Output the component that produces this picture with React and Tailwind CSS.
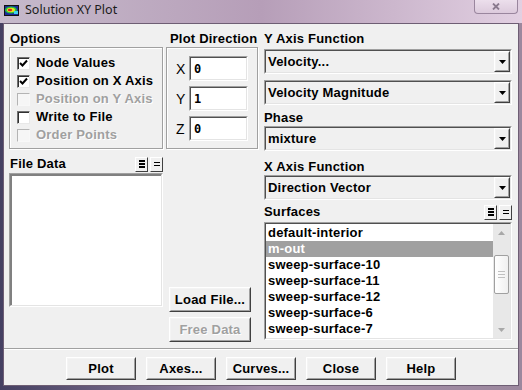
import React from 'react';

// win-classic bevels
const raised = 'border border-t-white border-l-white border-b-[#404040] border-r-[#404040]';
const raisedInner = 'border border-t-[#f4f4f4] border-l-[#f4f4f4] border-b-[#a0a0a0] border-r-[#a0a0a0]';
const sunken = 'border border-t-[#a0a0a0] border-l-[#a0a0a0] border-b-white border-r-white';
const sunkenInner = 'border border-t-[#505050] border-l-[#505050] border-b-[#e4e4e4] border-r-[#e4e4e4]';
const etched = 'border border-[#a0a0a0] shadow-[inset_1px_1px_0_#fff,1px_1px_0_#fff]';
const dim = 'text-[#a0a0a0] [text-shadow:1px_1px_0_#fff]';

function Btn({ children, disabled, className = '' }) {
  return (
    <div className={`${raised} bg-[#f0f0f0] ${className}`}>
      <div className={`${raisedInner} flex h-full w-full items-center justify-center text-[13px] font-bold tracking-[0.2px] ${disabled ? dim : 'text-black'}`}>
        {children}
      </div>
    </div>
  );
}

function Check({ label, checked, disabled }) {
  return (
    <div className="flex h-[18px] items-center gap-[6px]">
      <span
        className={`flex h-[13px] w-[13px] items-center justify-center border ${
          disabled
            ? 'border-t-[#b4b4b4] border-l-[#b4b4b4] border-b-[#f8f8f8] border-r-[#f8f8f8] bg-[#f6f6f6]'
            : 'border-t-[#707070] border-l-[#707070] border-b-[#e8e8e8] border-r-[#e8e8e8] bg-white shadow-[inset_1px_1px_0_#303030]'
        }`}
      >
        {checked && (
          <svg width="9" height="9" viewBox="0 0 9 9">
            <path d="M1 4 L3.5 6.5 L8 1.5" stroke="#000" strokeWidth="2" fill="none" />
          </svg>
        )}
      </span>
      <span className={`text-[13px] font-bold tracking-[0.2px] ${disabled ? dim : 'text-black'}`}>{label}</span>
    </div>
  );
}

function Combo({ value }) {
  return (
    <div className={`${sunken} h-[25px] bg-[#f0f0f0]`}>
      <div className={`${sunkenInner} flex h-full items-center bg-[#f0f0f0]`}>
        <span className="flex-1 pl-[2px] text-[13px] font-bold tracking-[0.2px]">{value}</span>
        <div className={`${raised} h-[21px] w-[16px]`}>
          <div className={`${raisedInner} flex h-full items-center justify-center`}>
            <svg width="7" height="4" viewBox="0 0 7 4">
              <path d="M0 0 H7 L3.5 4 Z" fill="#000" />
            </svg>
          </div>
        </div>
      </div>
    </div>
  );
}

function AxisInput({ axis, value }) {
  return (
    <div className="flex h-[25px] items-center">
      <span className="w-[13px] text-[14px] leading-none text-black">{axis}</span>
      <div className={`${sunken} h-[25px] w-[59px] bg-white`}>
        <div className={`${sunkenInner} flex h-full items-center bg-white pl-[3px] font-['DejaVu_Sans_Mono',monospace] text-[12px] font-bold`}>
          {value}
        </div>
      </div>
    </div>
  );
}

function MiniBtns() {
  return (
    <div className="flex gap-[2px]">
      <div className={`${raised} h-[15px] w-[13px] bg-[#f0f0f0]`}>
        <div className="flex h-full flex-col items-center justify-center gap-[1px]">
          <span className="h-[2px] w-[6px] bg-black" />
          <span className="h-[2px] w-[6px] bg-black" />
          <span className="h-[2px] w-[6px] bg-black" />
        </div>
      </div>
      <div className={`${raised} h-[15px] w-[13px] bg-[#f0f0f0]`}>
        <div className="flex h-full flex-col items-center justify-center gap-[2px]">
          <span className="h-[1px] w-[6px] bg-black" />
          <span className="h-[1px] w-[6px] bg-black" />
        </div>
      </div>
    </div>
  );
}

const surfaces = [
  'default-interior',
  'm-out',
  'sweep-surface-10',
  'sweep-surface-11',
  'sweep-surface-12',
  'sweep-surface-6',
  'sweep-surface-7',
];

function Label({ children, className = '' }) {
  return <div className={`h-[16px] text-[13px] font-bold leading-[16px] tracking-[0.2px] ${className}`}>{children}</div>;
}

export default function App() {
  return (
    <div className="flex h-[390px] w-[522px] flex-col bg-linear-to-r from-[#454062] via-[#a48eaa] to-[#9c889e] px-[3px] pb-[4px] font-['Liberation_Sans',Arial,sans-serif] text-black">
      {/* title bar */}
      <div className="relative -mx-[3px] flex h-[23px] items-center gap-[6px] bg-linear-to-r from-[#c6bacb] via-[#b69eb8] to-[#e2d0e2] pb-[3px] pl-[4px]">
        <svg width="15" height="11" viewBox="0 0 15 11">
          <rect x="0" y="0" width="15" height="11" fill="#111" />
          <rect x="1" y="1" width="13" height="9" fill="#1a2a9a" />
          <ellipse cx="7" cy="5" rx="6" ry="3.5" fill="#28c040" />
          <ellipse cx="7" cy="5" rx="4" ry="2.2" fill="#e8e020" />
          <ellipse cx="6" cy="5" rx="2.2" ry="1.3" fill="#e02020" />
          <rect x="10" y="6" width="4" height="3" fill="#40d0f0" />
        </svg>
        <span className="font-['Noto_Sans',sans-serif] text-[12.5px] text-[#1c1c1c]">Solution XY Plot</span>
        <div className="absolute right-[4px] top-0 flex h-[14px] w-[44px] items-center justify-center rounded-b-[4px] border border-t-0 border-[#9a869e] bg-linear-to-b from-[#ecdfec] to-[#dccadc]">
          <svg width="8" height="7" viewBox="0 0 8 7">
            <path d="M1 0.5 L7 6.5 M7 0.5 L1 6.5" stroke="#8a7a8e" strokeWidth="1.8" />
          </svg>
        </div>
      </div>

      {/* client area */}
      <div className="flex flex-1 flex-col border border-[#6e5e74] bg-[#f0f0f0]">
        <div className="flex h-[324px] pl-[5px] pr-[6px] pt-[7px]">
          {/* left column */}
          <div className="flex w-[154px] flex-col">
            <Label className="pl-[1px]">Options</Label>
            <div className={`${etched} h-[102px] pl-[7px] pt-[6px]`}>
              <Check label="Node Values" checked />
              <Check label="Position on X Axis" checked />
              <Check label="Position on Y Axis" disabled />
              <Check label="Write to File" />
              <Check label="Order Points" disabled />
            </div>
            <div className="mt-[6px] flex h-[18px] items-center justify-between">
              <Label className="pl-[1px]">File Data</Label>
              <MiniBtns />
            </div>
            <div className={`${sunken} h-[134px] bg-white`}>
              <div className={`${sunkenInner} h-full border-t-[#808080] border-l-[#808080] bg-white shadow-[inset_1px_1px_0_#808080]`} />
            </div>
          </div>

          {/* middle column */}
          <div className="ml-[3px] flex w-[92px] flex-col">
            <Label className="pl-[4px]">Plot Direction</Label>
            <div className={`${etched} flex h-[102px] flex-col gap-[5px] pl-[9px] pt-[8px]`}>
              <AxisInput axis="X" value="0" />
              <AxisInput axis="Y" value="1" />
              <AxisInput axis="Z" value="0" />
            </div>
            <div className="mt-auto mb-[6px] ml-[3px] flex flex-col gap-[5px]">
              <Btn className="h-[25px] w-[82px]">Load File...</Btn>
              <Btn className="h-[25px] w-[82px]" disabled>Free Data</Btn>
            </div>
          </div>

          {/* right column */}
          <div className="ml-[6px] flex w-[248px] flex-col">
            <Label>Y Axis Function</Label>
            <div className="mt-[2px]"><Combo value="Velocity..." /></div>
            <div className="mt-[6px]"><Combo value="Velocity Magnitude" /></div>
            <Label className="mt-[5px]">Phase</Label>
            <Combo value="mixture" />
            <Label className="mt-[8px]">X Axis Function</Label>
            <Combo value="Direction Vector" />
            <div className="mt-[2px] flex h-[20px] items-center justify-between">
              <Label>Surfaces</Label>
              <MiniBtns />
            </div>
            <div className={`${sunken} h-[118px] bg-white`}>
              <div className={`${sunkenInner} flex h-full bg-white`}>
                <div className="flex flex-1 flex-col pt-[1px]">
                  {surfaces.map((s) => (
                    <div
                      key={s}
                      className={`h-[16px] pl-[2px] text-[13px] font-bold leading-[16px] tracking-[0.2px] ${
                        s === 'm-out' ? 'bg-[#a0a0a0] text-white' : 'text-black'
                      }`}
                    >
                      {s}
                    </div>
                  ))}
                </div>
                <div className="flex w-[17px] flex-col items-center bg-[#e8e8e8]">
                  <div className="flex h-[17px] items-center justify-center">
                    <svg width="7" height="4" viewBox="0 0 7 4"><path d="M0 4 H7 L3.5 0 Z" fill="#a8a8a8" /></svg>
                  </div>
                  <div className="mt-[14px] flex h-[39px] w-[15px] flex-col items-center justify-center gap-[2px] rounded-[2px] border border-[#a0a0a0] bg-linear-to-r from-white to-[#f0f0f0]">
                    <span className="h-px w-[7px] bg-[#c0c0c0]" />
                    <span className="h-px w-[7px] bg-[#c0c0c0]" />
                    <span className="h-px w-[7px] bg-[#c0c0c0]" />
                  </div>
                  <div className="mt-auto flex h-[17px] items-center justify-center">
                    <svg width="7" height="4" viewBox="0 0 7 4"><path d="M0 0 H7 L3.5 4 Z" fill="#a8a8a8" /></svg>
                  </div>
                </div>
              </div>
            </div>
          </div>
        </div>

        {/* separator */}
        <div className="h-[2px] border-t border-t-[#a0a0a0] border-b border-b-white" />

        {/* bottom buttons */}
        <div className="flex justify-center gap-[10px] pt-[7px]">
          <Btn className="h-[23px] w-[70px]">Plot</Btn>
          <Btn className="h-[23px] w-[70px]">Axes...</Btn>
          <Btn className="h-[23px] w-[70px]">Curves...</Btn>
          <Btn className="h-[23px] w-[70px]">Close</Btn>
          <Btn className="h-[23px] w-[70px]">Help</Btn>
        </div>
      </div>
    </div>
  );
}
